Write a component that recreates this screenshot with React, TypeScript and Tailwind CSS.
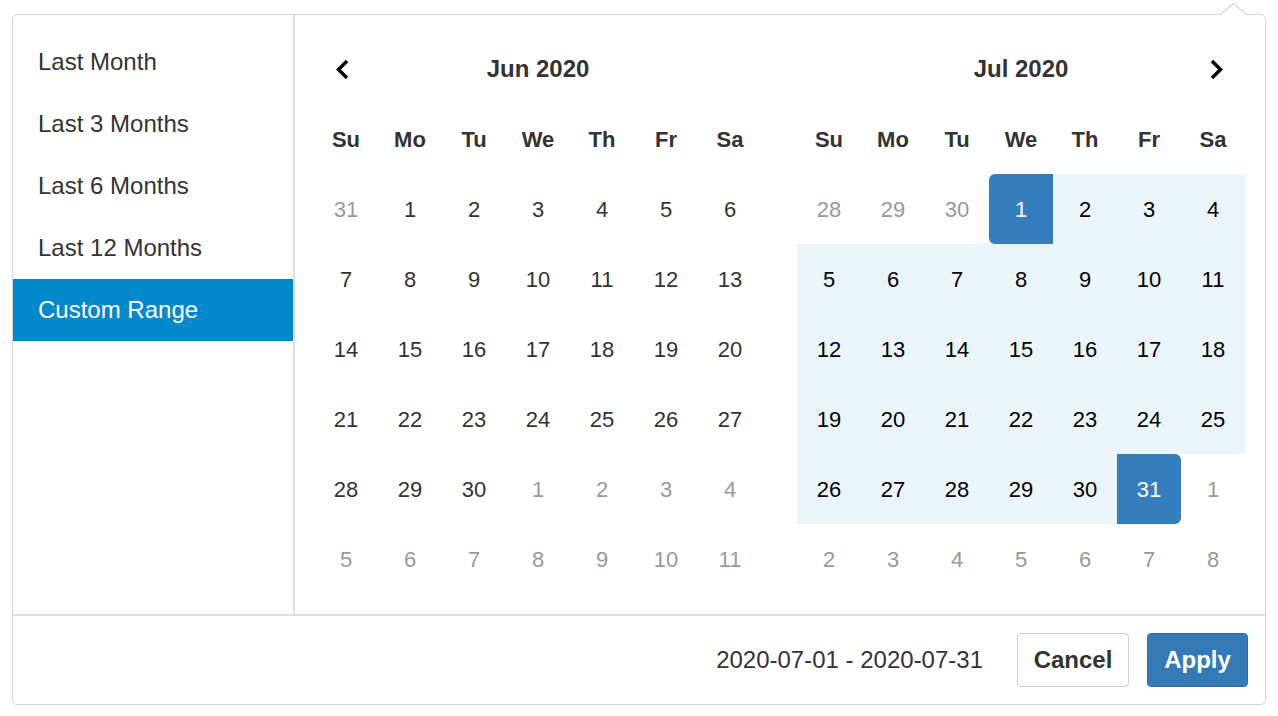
import clsx from 'clsx';

const RANGES = ['Last Month', 'Last 3 Months', 'Last 6 Months', 'Last 12 Months', 'Custom Range'];
const DAY_NAMES = ['Su', 'Mo', 'Tu', 'We', 'Th', 'Fr', 'Sa'];

type Day = { n: number; off?: boolean; start?: boolean; end?: boolean; inRange?: boolean };

function buildMonth(prevLast: number, firstDow: number, days: number, range?: [number, number]): Day[] {
  const cells: Day[] = [];
  for (let i = firstDow - 1; i >= 0; i--) cells.push({ n: prevLast - i, off: true });
  for (let d = 1; d <= days; d++) {
    const cell: Day = { n: d };
    if (range) {
      cell.start = d === range[0];
      cell.end = d === range[1];
      cell.inRange = d >= range[0] && d <= range[1];
    }
    cells.push(cell);
  }
  let next = 1;
  while (cells.length < 42) cells.push({ n: next++, off: true });
  return cells;
}

function Arrow({ dir }: { dir: 'left' | 'right' }) {
  return (
    <svg width="14" height="21" viewBox="0 0 14 21" className="inline-block">
      <polyline
        points={dir === 'left' ? '12,2 3.5,10.5 12,19' : '2,2 10.5,10.5 2,19'}
        fill="none"
        stroke="#000"
        strokeWidth="3.4"
        strokeLinejoin="miter"
      />
    </svg>
  );
}

function Calendar({ title, days, prev, next }: { title: string; days: Day[]; prev?: boolean; next?: boolean }) {
  const weeks = Array.from({ length: 6 }, (_, w) => days.slice(w * 7, w * 7 + 7));
  return (
    <div className="w-[448px]">
      <div className="grid h-[70px] grid-cols-7 items-center">
        <div className="flex justify-center pr-[8px]">{prev && <Arrow dir="left" />}</div>
        <div className="col-span-5 text-center text-[24px] font-bold text-[#333]">{title}</div>
        <div className="flex justify-center pl-[7px]">{next && <Arrow dir="right" />}</div>
      </div>
      <div className="grid h-[70px] grid-cols-7 items-center">
        {DAY_NAMES.map((d) => (
          <div key={d} className="text-center text-[22px] font-bold text-[#333]">
            {d}
          </div>
        ))}
      </div>
      {weeks.map((week, wi) => (
        <div key={wi} className="grid h-[70px] grid-cols-7">
          {week.map((day, di) => (
            <div
              key={di}
              className={clsx(
                'flex items-center justify-center text-[22px]',
                day.off && 'text-[#999]',
                !day.off && !day.inRange && 'text-[#333]',
                day.inRange && !day.start && !day.end && 'bg-[#ebf4f8] text-black',
                (day.start || day.end) && 'bg-[#357ebd] text-white',
                day.start && 'rounded-l-[6px]',
                day.end && 'rounded-r-[6px]',
              )}
            >
              {day.n}
            </div>
          ))}
        </div>
      ))}
    </div>
  );
}

export default function App() {
  const june = buildMonth(31, 1, 30);
  const july = buildMonth(30, 3, 31, [1, 31]);

  return (
    <div className="min-h-screen bg-white pl-[12px] pt-[14px] [font-family:'Liberation_Sans',Arial,sans-serif]">
      <div className="relative w-[1254px] rounded-[5px] border border-[#d4d4d4] bg-white">
        <svg width="29" height="13" viewBox="0 0 29 13" className="absolute left-[1206px] top-[-12px]">
          <polygon points="1,13 14.5,1 28,13" fill="#fff" />
          <polyline points="1,12 14.5,0.5 28,12" fill="none" stroke="#d4d4d4" strokeWidth="1.2" />
        </svg>
        <div className="flex">
          <ul className="w-[282px] shrink-0 border-r-2 border-[#ddd] pt-[16px]">
            {RANGES.map((r, i) => (
              <li
                key={r}
                className={clsx(
                  'flex h-[62px] items-center pl-[25px] text-[24px]',
                  i === RANGES.length - 1 ? 'bg-[#08c] text-white' : 'text-[#333]',
                )}
              >
                {r}
              </li>
            ))}
          </ul>
          <div className="flex gap-[35px] pb-[20px] pl-[19px] pt-[19px]">
            <Calendar title="Jun 2020" days={june} prev />
            <Calendar title="Jul 2020" days={july} next />
          </div>
        </div>
        <div className="flex h-[90px] items-center justify-end border-t-2 border-[#ddd] pr-[17px]">
          <span className="mr-[34px] text-[24px] text-[#333]">2020-07-01 - 2020-07-31</span>
          <button
            type="button"
            className="mr-[18px] h-[54px] w-[112px] rounded-[4px] border border-[#ccc] bg-white text-[24px] font-bold text-[#333]"
          >
            Cancel
          </button>
          <button
            type="button"
            className="h-[54px] w-[101px] rounded-[4px] border border-[#2e6da4] bg-[#337ab7] text-[24px] font-bold text-white"
          >
            Apply
          </button>
        </div>
      </div>
    </div>
  );
}
